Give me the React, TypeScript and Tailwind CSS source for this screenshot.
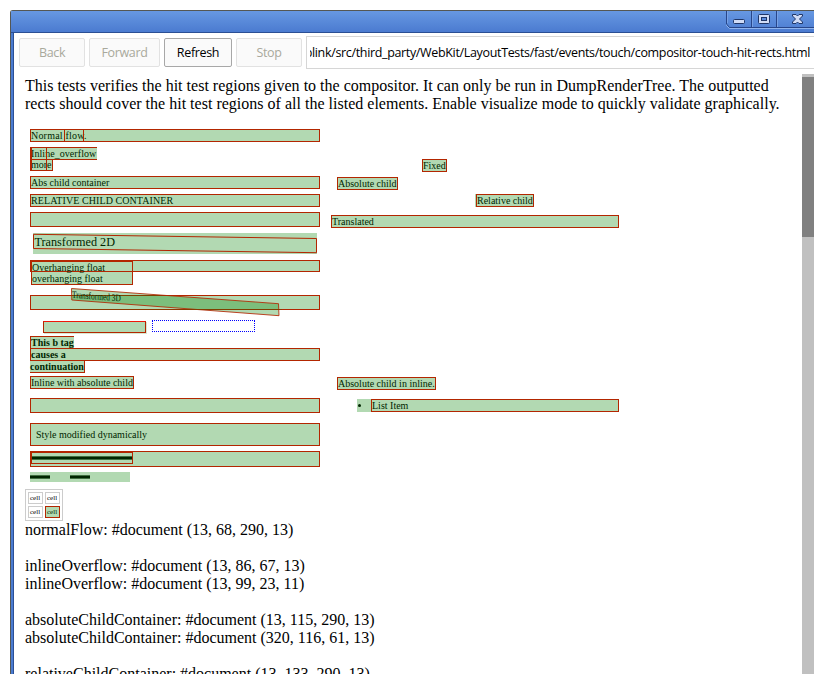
import type { ReactNode } from "react";

const cx = (...parts: (string | undefined)[]) => parts.filter(Boolean).join(" ");

function ToolButton({ label, className, active }: { label: string; className: string; active?: boolean }) {
  return (
    <button
      className={cx(
        "h-[29px] shrink-0 rounded-[2px] border text-center leading-[27px]",
        active ? "border-[#a8a8a8] bg-[#fafafa] text-black" : "border-[#e2e2e2] bg-[#fafafa] text-[#a9a99c]",
        className,
      )}
    >
      {label}
    </button>
  );
}

function Hit({ className, children }: { className?: string; children?: ReactNode }) {
  return (
    <div className={cx("shrink-0 whitespace-nowrap border border-[#b32600] bg-[#b2d9b2] text-[#002600]", className)}>
      {children}
    </div>
  );
}

function Row({ className, children }: { className: string; children: ReactNode }) {
  return <div className={cx("flex items-start", className)}>{children}</div>;
}

function WindowControls() {
  return (
    <svg className="h-[18px] w-[88px]" viewBox="0 0 88 18" fill="none">
      <path d="M.5 0V14.500L3.500 17.500H88" stroke="#8fb4ee" />
      <path d="M.5 0V13L3.500 16.500H88M25.500 0V16M50.500 0V16" stroke="#27468a" />
      <path d="M1.500 0V12M26.500 0V16M51.500 0V16" stroke="#79a2e4" />
      <rect x="7.500" y="8.500" width="11" height="4" rx="1" fill="#d0dcf6" stroke="#1f3668" />
      <rect x="32.500" y="3.500" width="11" height="9" rx="1" fill="#d0dcf6" stroke="#1f3668" />
      <rect x="35.500" y="6.500" width="5" height="3" fill="#5b8bdb" stroke="#1f3668" />
      <path
        d="M66.500 3.500H70L71.500 5L73 3.500H76.500V5L73.500 8L76.500 11V12.500H73L71.500 11L70 12.500H66.500V11L69.500 8L66.500 5Z"
        fill="#d0dcf6"
        stroke="#1f3668"
      />
    </svg>
  );
}

function HitTests() {
  return (
    <div className="ml-[5px] mt-4 text-[10px] leading-[11px]">
      <Row className="h-[13px]">
        <Hit className="relative h-[13px] w-[290px] tracking-[0.200px]">
          Normal flow.
          <span className="absolute -top-px left-[33px] h-[13px] w-5 border border-[#b32600]" />
        </Hit>
      </Row>

      <Row className="mt-[5px] h-6">
        <div className="relative w-[67px]">
          <Hit className="h-[13px] w-[67px] border-r-0 tracking-[0.060px]">Inline_overflow</Hit>
          <Hit className="-mt-px h-3 w-[23px] border-t-0">more</Hit>
          <span className="absolute left-px top-px h-[23px] w-4 border border-t-0 border-[#b32600]" />
          <span className="absolute left-0 top-3 h-px w-[66px] bg-[#b32600]" />
        </div>
        <Hit className="ml-[325px] mt-3 h-[13px] w-[25px]">Fixed</Hit>
      </Row>

      <Row className="mt-[5px] h-[13px]">
        <Hit className="h-[13px] w-[290px]">Abs child container</Hit>
        <Hit className="ml-[17px] mt-px h-[13px] w-[61px]">Absolute child</Hit>
      </Row>

      <Row className="mt-[5px] h-[13px]">
        <Hit className="h-[13px] w-[290px] tracking-[0.080px]">RELATIVE CHILD CONTAINER</Hit>
        <div className="ml-[155px] bg-[#b2d9b2] pl-px">
          <Hit className="h-[13px] w-[58px]">Relative child</Hit>
        </div>
      </Row>

      <Row className="mt-[5px] h-[15px]">
        <Hit className="h-[15px] w-[290px]" />
        <Hit className="ml-[11px] mt-[3px] h-[13px] w-[288px]">Translated</Hit>
      </Row>

      <Row className="ml-[3px] mt-[6px] h-[21px]">
        <div className="relative h-[21px] w-[284px] bg-[#b2d9b2] pl-[1.500px] pt-[2px] text-[12.200px] leading-[15px] text-[#002600]">
          Transformed 2D
          <svg className="absolute left-0 top-0 h-[21px] w-[284px]" viewBox="0 0 284 21" fill="none">
            <path d="M.5 1.300L283.500 5.500V19.700L.5 15.500Z" stroke="#b32600" />
          </svg>
        </div>
      </Row>

      <Row className="relative mt-[6px] h-3">
        <Hit className="h-3 w-[290px]" />
        <Hit className="absolute left-px top-px h-6 w-[102px] bg-transparent">
          <span className="absolute inset-x-0 bottom-0 top-[10px] bg-[#b2d9b2]" />
          <span className="absolute -left-[2px] right-0 top-[9px] h-px bg-[#b32600]" />
          <span className="relative">
            Overhanging float
            <br />
            overhanging float
          </span>
        </Hit>
      </Row>

      <Row className="relative mt-[23px] h-[15px]">
        <Hit className="h-[15px] w-[290px]" />
        <svg className="absolute -top-2 left-10 h-8 w-[212px]" viewBox="0 0 212 32">
          <path d="M1.500 1.500L208.500 16.700L209 28.700L1.800 13Z" fill="#008000" fillOpacity=".3" stroke="#b32600" strokeOpacity=".85" />
          <text
            transform="matrix(.74 .054 0 1 2 10.800)"
            fontFamily="Liberation Serif"
            fontSize="10"
            fill="#002600"
          >
            Transformed 3D
          </text>
          <path d="M0 22.500H212" stroke="#803f00" strokeOpacity=".8" />
        </svg>
      </Row>

      <Row className="mt-[10px] h-[13px]">
        <Hit className="ml-[13px] mt-px h-3 w-[103px] border-t-[#ee1808] shadow-[1px_1px_0_#d9e8d0]" />
        <div className="ml-[6px] h-3 w-[103px] border border-dotted border-[#0000ff]" />
      </Row>

      <div className="mt-[3px] h-[37px] font-bold">
        <Hit className="h-3 w-11 border-b-0 border-r-0">This b tag</Hit>
        <Hit className="h-[13px] w-[290px]">causes a</Hit>
        <Hit className="h-3 w-[55px] border-l-0 border-t-0 leading-[11px]">continuation</Hit>
      </div>

      <Row className="mt-[3px] h-[13px]">
        <Hit className="h-[13px] w-[104px]">Inline with absolute child</Hit>
        <Hit className="ml-[203px] mt-px h-[13px] w-[99px]">Absolute child in inline.</Hit>
      </Row>

      <Row className="mt-[9px] h-[15px]">
        <Hit className="h-[15px] w-[290px]" />
        <div className="ml-[37px] mt-px flex h-[13px] items-center bg-[#b2d9b2]">
          <span className="ml-px mr-[10px] h-[3px] w-[3px] rounded-full bg-[#002600]" />
          <Hit className="h-[13px] w-[248px]">List Item</Hit>
        </div>
      </Row>

      <Row className="mt-[10px] h-[23px]">
        <Hit className="h-[23px] w-[290px] p-[5px]">Style modified dynamically</Hit>
      </Row>

      <Row className="mt-[5px] h-4">
        <Hit className="h-4 w-[290px]">
          <div className="h-3 w-[102px] border border-[#b32600] pt-[3px]">
            <div className="h-1 border-y border-[#407040] bg-[#002600]" />
          </div>
        </Hit>
      </Row>

      <div className="mt-[5px] flex h-[10px] w-[100px] gap-5 bg-[#b2d9b2] pt-[3px]">
        <div className="h-1 w-5 border-y border-[#407040] bg-[#002600]" />
        <div className="h-1 w-5 border-y border-[#407040] bg-[#002600]" />
      </div>
    </div>
  );
}

function CellTable() {
  const cell = "h-3 w-[15px] border pl-px text-[7px] leading-[10px]";
  return (
    <div className="mt-[7px] grid h-8 w-[38px] grid-cols-[15px_15px] gap-[2px] border border-[#ccc] p-[2px]">
      <div className={cx(cell, "border-[#ccc]")}>cell</div>
      <div className={cx(cell, "border-[#ccc]")}>cell</div>
      <div className={cx(cell, "border-[#ccc]")}>cell</div>
      <div className={cx(cell, "border-[#b32600] bg-[#b2d9b2] text-[#002600]")}>cell</div>
    </div>
  );
}

const log = [
  "normalFlow: #document (13, 68, 290, 13)",
  "",
  "inlineOverflow: #document (13, 86, 67, 13)",
  "inlineOverflow: #document (13, 99, 23, 11)",
  "",
  "absoluteChildContainer: #document (13, 115, 290, 13)",
  "absoluteChildContainer: #document (320, 116, 61, 13)",
  "",
  "relativeChildContainer: #document (13, 133, 290, 13)",
];

export default function App() {
  return (
    <div className="h-[674px] w-[814px] overflow-hidden bg-white pl-[10px] pt-[10px] text-black">
      <div className="flex h-[664px] flex-col rounded-tl-[3px] border-l border-t border-[#555753] bg-[#4a7bd0]">
        <div className="flex h-[22px] shrink-0 justify-end border-b border-[#2b4f94] bg-linear-to-b from-[#6798e2] to-[#4b7bd0]">
          <WindowControls />
        </div>
        <div className="ml-[2px] flex min-h-0 flex-1 flex-col border-l border-[#2b4f94] bg-white">
          <div className="flex h-[41px] shrink-0 pl-[5px] pt-[3px] font-['Open_Sans',sans-serif] text-[12.500px] tracking-[-0.340px]">
            <div className="flex gap-1 pt-[2px]">
              <ToolButton label="Back" className="w-[66px]" />
              <ToolButton label="Forward" className="w-[71px]" />
              <ToolButton label="Refresh" className="w-[68px]" active />
              <ToolButton label="Stop" className="w-[66px]" />
            </div>
            <div className="ml-1 flex h-[33px] min-w-0 flex-1 border border-r-0 border-[#d6d6d6] pl-[3px] pr-1 leading-[31px]">
              <div className="flex min-w-0 flex-1 justify-end overflow-hidden">
                <span className="shrink-0 whitespace-nowrap">
                  blink/src/third_party/WebKit/LayoutTests/fast/events/touch/compositor-touch-hit-rects.html
                </span>
              </div>
            </div>
          </div>
          <div className="flex min-h-0 flex-1">
            <main className="min-w-0 flex-1 overflow-hidden pl-[11px] pt-[3px] font-['Liberation_Serif',serif] text-[16px] leading-[18px]">
              <p className="whitespace-nowrap tracking-[0.010px]">
                This tests verifies the hit test regions given to the compositor. It can only be run in DumpRenderTree. The outputted
                <br />
                rects should cover the hit test regions of all the listed elements. Enable visualize mode to quickly validate graphically.
              </p>
              <HitTests />
              <CellTable />
              {log.map((line, i) => (
                <div key={i} className="h-[18px] whitespace-nowrap">
                  {line}
                </div>
              ))}
            </main>
            <div className="w-3 shrink-0 bg-[#c0c0c0] pt-[3px]">
              <div className="h-[160px] bg-[#808080]" />
            </div>
          </div>
        </div>
      </div>
    </div>
  );
}
